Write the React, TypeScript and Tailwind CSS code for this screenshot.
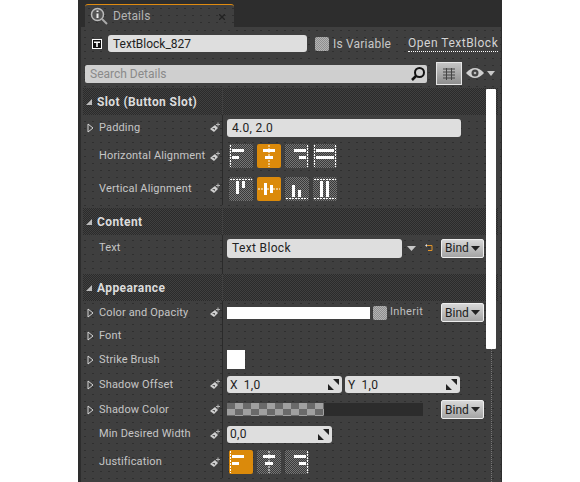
import React from 'react';

const stipple = 'bg-[#3f3f3f] bg-[radial-gradient(#2f2f2f_0.6px,transparent_0.7px)] bg-[length:8px_7px]';
const fine = 'bg-[repeating-conic-gradient(#767676_0_25%,#3a3a3a_0_50%)] bg-[length:2px_2px]';
const headFine = 'bg-[repeating-conic-gradient(#404040_0_25%,#2b2b2b_0_50%)] bg-[length:2px_2px]';
const check = 'bg-[repeating-conic-gradient(#b4b4b4_0_25%,#8e8e8e_0_50%)] bg-[length:2px_2px]';
const inputBg = 'bg-[#dedede] rounded-[3px] text-[#222] flex items-center';

const Pin = () => (
  <svg width="11" height="11" viewBox="0 0 11 11" className="shrink-0">
    <path d="M0 7 L5 3 L8 6 L4 10 Z" fill="#d0d0d0" />
    <path d="M2 6 L5 6 L5 8 Z" fill="#555" />
    <path d="M8 0.5 V4.5 M6 2.5 H10" stroke="#b5b5b5" strokeWidth="1" />
  </svg>
);

const Expander = () => (
  <svg width="7" height="10" viewBox="0 0 7 10" className="shrink-0">
    <path d="M1 1 L6 5 L1 9 Z" fill="none" stroke="#d5d5d5" strokeWidth="1" />
  </svg>
);

type RowProps = { label: string; expand?: boolean; low?: boolean; pin?: boolean; h: string; children?: React.ReactNode };

const Row = ({ label, expand, low, pin = true, h, children }: RowProps) => (
  <div className={`flex ${h}`}>
    <div className="w-[140px] shrink-0 flex items-center border-r border-[#2a2a2a] pr-[1px]">
      <div className="w-[16px] shrink-0 flex justify-end pr-[5px]">{expand && <Expander />}</div>
      <span className={`flex-1 text-[11px] tracking-[0.15px] text-[#c6c6c6] whitespace-nowrap ${expand || low ? 'pt-[2px]' : ''}`}>{label}</span>
      {pin && <Pin />}
    </div>
    <div className="flex-1 flex items-center pl-[4px] min-w-0">{children}</div>
  </div>
);

const Section = ({ title }: { title: string }) => (
  <div className="flex h-[27px]">
    <div className={`w-[139px] flex items-center ${headFine}`}>
      <svg width="6" height="6" viewBox="0 0 6 6" className="ml-[3px] mr-[5px]"><path d="M6 0 V6 H0 Z" fill="#bcbcbc" /></svg>
      <span className="text-[12px] font-bold tracking-[0.4px] text-[#dcdcdc]">{title}</span>
    </div>
    <div className={`flex-1 ml-[1px] ${headFine}`} />
  </div>
);

const Bind = () => (
  <div className="w-[43px] h-[19px] shrink-0 flex items-center justify-center gap-[2px] border border-[#eee] rounded-[2px] bg-gradient-to-b from-[#d8d8d8] to-[#a4a4a4] text-[12px] text-[#1c1c1c]">
    Bind
    <svg width="9" height="5" viewBox="0 0 9 5"><path d="M0 0 H9 L4.5 5 Z" fill="#222" /></svg>
  </div>
);

const Spin = () => (
  <svg width="11" height="11" viewBox="0 0 11 11" className="shrink-0">
    <path d="M5 0 H11 V6 Z M0 5 L6 11 H0 Z" fill="#222" />
  </svg>
);

const AlignBtn = ({ on, d, guide }: { on?: boolean; d: string; guide: string }) => (
  <div className={`w-[24px] h-[24px] rounded-[2px] shrink-0 ${on ? 'bg-[#db8a0b]' : fine}`}>
    <svg width="24" height="24" viewBox="0 0 24 24">
      <path d={guide} stroke="#fff" strokeWidth="1" strokeDasharray="2 1" fill="none" />
      <path d={d} fill="#fff" />
    </svg>
  </div>
);

const H = [
  { guide: 'M1.5 1 V23', d: 'M3 5 H15 V8 H3 Z M3 12 H10 V15 H3 Z' },
  { guide: 'M12 1 V23', d: 'M6 5 H18 V8 H6 Z M8 12 H16 V15 H8 Z' },
  { guide: 'M22.5 1 V23', d: 'M9 5 H21 V8 H9 Z M14 12 H21 V15 H14 Z' },
  { guide: 'M1.5 1 V23 M22.5 1 V23', d: 'M3 5 H21 V8 H3 Z M3 12 H21 V15 H3 Z' },
];
const V = [
  { guide: 'M1 2.5 H23', d: 'M7 4 H10 V17 H7 Z M13 4 H16 V11 H13 Z' },
  { guide: 'M1 12 H23', d: 'M7 6 H10 V18 H7 Z M13 8 H16 V16 H13 Z' },
  { guide: 'M1 21.5 H23', d: 'M7 8 H10 V20 H7 Z M13 13 H16 V20 H13 Z' },
  { guide: 'M1 2.5 H23 M1 21.5 H23', d: 'M7 4 H10 V20 H7 Z M13 4 H16 V20 H13 Z' },
];

export default function App() {
  return (
    <div className="w-[580px] h-[482px] bg-white overflow-hidden font-['Roboto',sans-serif]">
      <div className="ml-[78px] w-[424px] h-[482px] bg-[#2d2d2d] flex flex-col">
        {/* Tab */}
        <div className="h-[27px] pt-[4px] pl-[7px]">
          <div className={`w-[149px] h-[23px] ${stipple} border-t border-[#e08b10] rounded-t-[3px] flex items-center pl-[5px] relative`}>
            <svg width="18" height="18" viewBox="0 0 18 18">
              <circle cx="7.5" cy="7.5" r="6" fill="#555" stroke="#bbb" strokeWidth="1.5" />
              <path d="M7.5 3.5 V5 M7.5 6.5 V11" stroke="#eee" strokeWidth="2" />
              <path d="M12 12 L17 17" stroke="#aaa" strokeWidth="2" />
            </svg>
            <span className="ml-[5px] text-[12px] tracking-[0.1px] text-[#b4b4b4]">Details</span>
            <svg width="6" height="6" viewBox="0 0 6 6" className="absolute right-[9px] top-[9px]"><path d="M0 0 L6 6 M6 0 L0 6" stroke="#222" strokeWidth="1.3" /></svg>
          </div>
        </div>

        <div className={`mx-[3px] mr-[1px] flex-1 ${stipple} flex flex-col relative`}>
          {/* Widget name */}
          <div className="h-[33px] flex items-center pl-[11px]">
            <svg width="10" height="10" viewBox="0 0 10 10" className="shrink-0">
              <rect width="10" height="10" fill="#fff" />
              <rect x="1" y="1" width="8" height="8" fill="#111" />
              <path d="M2 2.5 H8 V4 H5.8 V8 H4.2 V4 H2 Z" fill="#fff" />
            </svg>
            <div className={`ml-[6px] w-[199px] h-[17px] pl-[5px] text-[12px] ${inputBg}`}>TextBlock_827</div>
            <div className={`ml-[8px] w-[14px] h-[14px] rounded-[2px] ${check}`} />
            <span className="ml-[4px] text-[12px] tracking-[0.2px] text-[#c8c8c8]">Is Variable</span>
            <span className="ml-[17px] text-[12px] tracking-[0.5px] text-[#d4d4d4] border-b border-dotted border-white leading-[15px]">Open TextBlock</span>
          </div>

          {/* Search */}
          <div className="h-[28px] flex items-start pl-[4px]">
            <div className="mt-[5px] w-[342px] h-[18px] bg-[#cfcfcf] rounded-[2px] flex items-center pl-[5px] text-[12px] text-[#8a8a8a]">
              <span className="flex-1">Search Details</span>
              <svg width="16" height="16" viewBox="0 0 16 16" className="mr-[1px]">
                <circle cx="9.5" cy="6.5" r="4.5" fill="none" stroke="#111" strokeWidth="2" />
                <path d="M6 10 L2 14" stroke="#111" strokeWidth="2.5" />
              </svg>
            </div>
            <div className="ml-[9px] mt-[2px] w-[26px] h-[23px] border border-[#e6e6e6] bg-gradient-to-b from-[#c4c4c4] to-[#8e8e8e] flex items-center justify-center">
              <svg width="14" height="12" viewBox="0 0 14 12">
                <path d="M1 1 H13 M1 4 H13 M1 7 H13 M1 10 H13 M4.5 0 V12 M9.5 0 V12" stroke="#444" strokeWidth="1" />
              </svg>
            </div>
            <svg width="30" height="12" viewBox="0 0 30 12" className="ml-[4px] mt-[7px]">
              <path d="M0 6 Q9 -4 18 6 Q9 16 0 6 Z" fill="#cfcfcf" />
              <circle cx="9" cy="6" r="3.5" fill="#444" />
              <circle cx="9" cy="6" r="1.3" fill="#bbb" />
              <path d="M21 4 H29 L25 9 Z" fill="#c8c8c8" />
            </svg>
          </div>

          {/* Rows */}
          <div className="pl-[2px] pr-[3px] flex flex-col">
            <Section title="Slot (Button Slot)" />
            <Row label="Padding" expand h="h-[25px]">
              <div className={`w-[234px] h-[18px] pl-[5px] text-[12px] tracking-[0.3px] ${inputBg}`}>4.0, 2.0</div>
            </Row>
            <Row label="Horizontal Alignment" h="h-[32px]">
              <div className="flex gap-[4px] pl-[2px]">
                {H.map((a, i) => <AlignBtn key={i} on={i === 1} d={a.d} guide={a.guide} />)}
              </div>
            </Row>
            <Row label="Vertical Alignment" low h="h-[33px]">
              <div className="flex gap-[4px] pl-[2px]">
                {V.map((a, i) => <AlignBtn key={i} on={i === 1} d={a.d} guide={a.guide} />)}
              </div>
            </Row>
            <div className="h-[3px]" />
            <Section title="Content" />
            <Row label="Text" pin={false} h="h-[26px]">
              <div className={`w-[175px] h-[19px] pl-[5px] text-[12px] tracking-[0.35px] ${inputBg}`}>Text Block</div>
              <svg width="9" height="5" viewBox="0 0 9 5" className="ml-[5px]"><path d="M0 0 H9 L4.5 5 Z" fill="#c8c8c8" /></svg>
              <svg width="8" height="8" viewBox="0 0 8 8" className="ml-[9px]"><path d="M1 1.5 H7 V6.5 H3" fill="none" stroke="#e0942a" strokeWidth="1" /><path d="M0 1.5 L2 0 V3 Z" fill="#ddd" /></svg>
              <div className="ml-[8px]"><Bind /></div>
            </Row>
            <div className="h-[13px] w-[140px] border-r border-[#2a2a2a]" />
            <Section title="Appearance" />
            <Row label="Color and Opacity" expand h="h-[23px]">
              <div className="w-[143px] h-[12px] bg-white" />
              <div className={`ml-[3px] w-[14px] h-[14px] rounded-[2px] ${check}`} />
              <span className="ml-[3px] w-[54px] text-[11px] tracking-[0.3px] text-[#bebebe]">Inherit</span>
              <div className="ml-[-3px]"><Bind /></div>
            </Row>
            <Row label="Font" expand pin={false} h="h-[23px]" />
            <Row label="Strike Brush" expand pin={false} h="h-[25px]">
              <div className="w-[18px] h-[19px] bg-white" />
            </Row>
            <Row label="Shadow Offset" expand h="h-[25px]">
              <div className={`w-[115px] h-[17px] px-[3px] text-[12px] tracking-[0.3px] justify-between ${inputBg}`}>
                <span><span className="mr-[6px]">X</span>1,0</span><Spin />
              </div>
              <div className={`ml-[3px] w-[115px] h-[17px] px-[3px] text-[12px] tracking-[0.3px] justify-between ${inputBg}`}>
                <span><span className="mr-[6px]">Y</span>1,0</span><Spin />
              </div>
            </Row>
            <Row label="Shadow Color" expand h="h-[25px]">
              <div className="w-[196px] h-[13px] bg-[#2c2c2c] shrink-0">
                <div className="w-[97px] h-full bg-[repeating-conic-gradient(#a0a0a0_0_25%,#6a6a6a_0_50%)] bg-[length:16px_12px]" />
              </div>
              <div className="ml-[18px]"><Bind /></div>
            </Row>
            <Row label="Min Desired Width" h="h-[24px]">
              <div className={`w-[105px] h-[17px] px-[3px] text-[12px] tracking-[0.3px] justify-between ${inputBg}`}>
                <span>0,0</span><Spin />
              </div>
            </Row>
            <Row label="Justification" h="h-[32px]">
              <div className="flex gap-[4px] pl-[2px]">
                {H.slice(0, 3).map((a, i) => <AlignBtn key={i} on={i === 0} d={a.d} guide={a.guide} />)}
              </div>
            </Row>
          </div>

          {/* Scrollbar */}
          <div className="absolute left-[405px] top-[62px] w-[10px] h-[260px] bg-white rounded-[1px]" />
          <div className="absolute left-[410px] top-[322px] h-[133px] border-l border-dotted border-[#777]" />
        </div>
      </div>
    </div>
  );
}
